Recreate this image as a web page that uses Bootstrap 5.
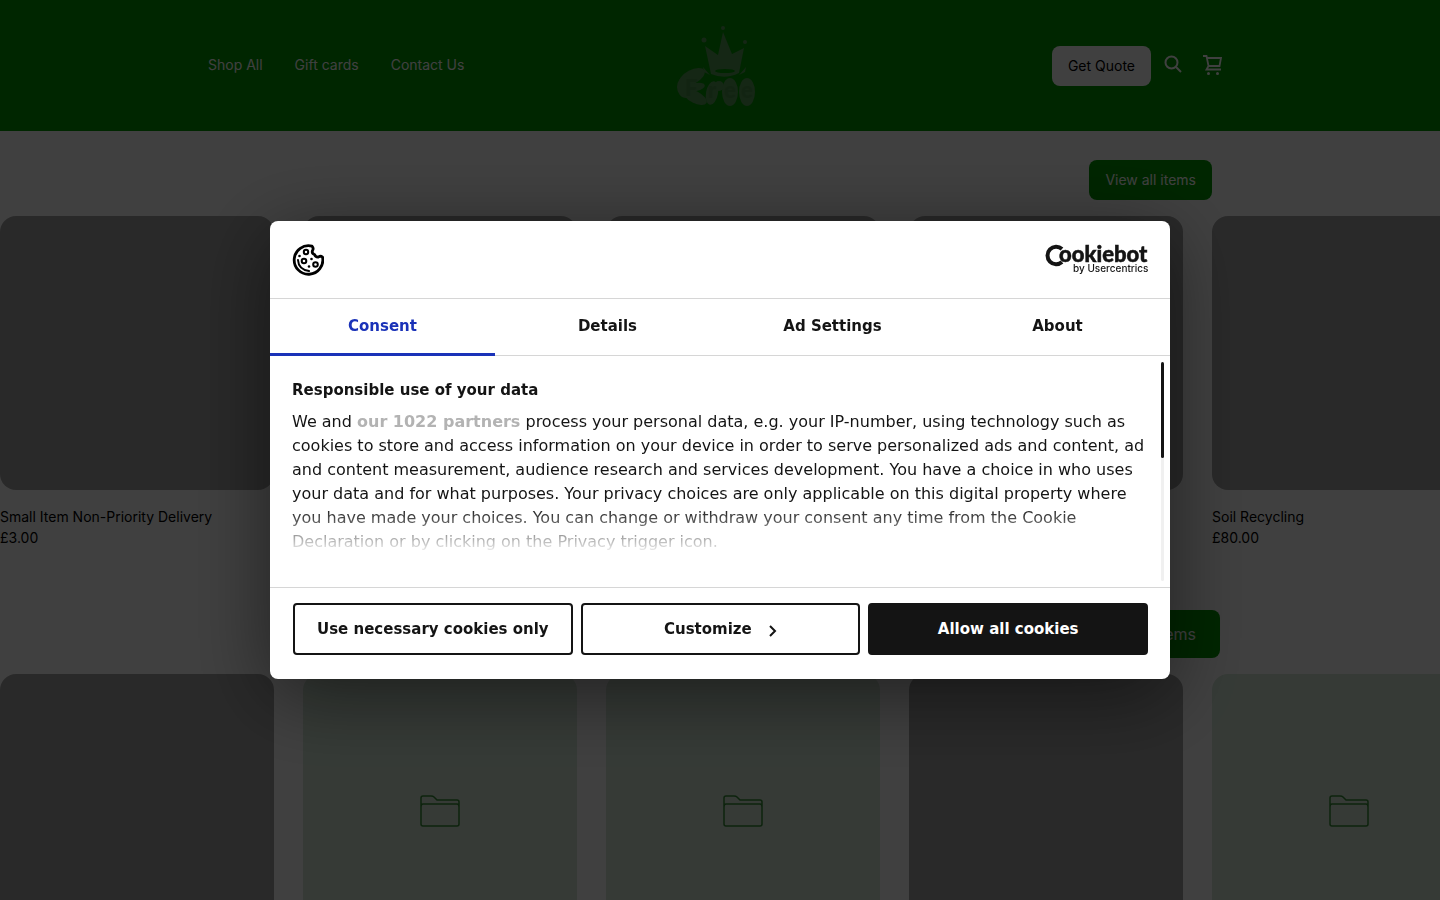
<!DOCTYPE html>
<html lang="en">
<head>
<meta charset="utf-8">
<meta name="viewport" content="width=device-width, initial-scale=1">
<title>Shop</title>
<link href="https://cdn.jsdelivr.net/npm/bootstrap@5.3.0/dist/css/bootstrap.min.css" rel="stylesheet">
<style>
  body { font-family: Inter, "Liberation Sans", sans-serif; font-size: 14px; line-height: 21px; color: #000; height: 100vh; overflow: hidden; }
  .shop-header { background: #009600; min-height: 131px; }
  .shop-wrap { width: 100%; max-width: 1024px; margin: 0 auto; }
  .shop-header a { color: #fff; text-decoration: none; }
  .side { flex: 1 1 0; }
  .main-nav { gap: 32px; padding-bottom: 2px; }
  .shop-btn { font-size: 14px; line-height: 24px; padding: 8px 16px; border: 0; border-radius: 8px; }
  .shop-btn.green { background: #009600; color: #fff; }
  .shop-btn.light { background: #fff; color: #000; }
  .shop-btn.large { font-size: 16px; line-height: 32px; padding: 8px 24px; }
  .icon-btn { border: 0; background: none; padding: 0 0 2px; color: #fff; line-height: 0; }
  .tiles { gap: 29px; }
  .tile { flex: 0 0 274px; }
  .tile-pic { aspect-ratio: 1; border-radius: 16px; background: #a4a4a4; color: #358a35; }
  .tile-pic.folder { background: #d6e8d8; }
  .backdrop { background: rgba(0,0,0,.75); }

  .modal { font-family: "DejaVu Sans", sans-serif; font-size: 15px; line-height: 24px; color: #141414; }
  .modal-dialog { max-width: 900px; margin-top: 0; margin-bottom: 0; min-height: 100%; }
  .modal-content { border: 0; border-radius: 8px; color: #141414; box-shadow: 0 16px 80px rgba(0,0,0,.5); }
  .dlg-head { min-height: 78px; padding: 0 22px; border-bottom: 1px solid #d6d6d6; }
  .dlg-tabs { border-bottom: 1px solid #d6d6d6; }
  .dlg-tabs button { border: 0; background: none; font-weight: 700; color: #141414; padding: 15px 0 17px; height: 57px; margin-bottom: -1px; border-bottom: 3px solid transparent; }
  .dlg-tabs button.active { color: #1a32b8; border-color: #1a32b8; }
  .dlg-body { padding: 22px 22px 32px; min-height: 231px; }
  .dlg-body h2 { font-size: 15px; line-height: 24px; font-weight: 700; margin: 0 0 8px; }
  .dlg-body p { font-size: 16px; line-height: 24px; }
  .dlg-body a { color: #b3b3b3; font-weight: 700; text-decoration: none; }
  .fade-out { left: 0; right: 16px; bottom: 32px; height: 56px; background: linear-gradient(rgba(255,255,255,0) 15%, #fff); }
  .track { right: 6px; top: 6px; bottom: 6px; width: 3px; border-radius: 2px; background: #f0f0f0; }
  .thumb { height: 96px; border-radius: 2px; background: #141414; }
  .dlg-foot { padding: 15px 22px 24px 23px; gap: 8px; border-top: 1px solid #d6d6d6; }
  .dlg-foot button { flex: 1 1 0; height: 52px; border: 2px solid #141414; border-radius: 4px; background: #fff; color: #141414; font-weight: 700; }
  .dlg-foot button.solid { background: #141414; color: #fff; }
</style>
</head>
<body>
<header class="shop-header d-flex align-items-center">
  <div class="shop-wrap d-flex align-items-center">
    <nav class="side main-nav d-flex" aria-label="Main">
      <a href="#">Shop All</a><a href="#">Gift cards</a><a href="#">Contact Us</a>
    </nav>
    <a href="#" aria-label="Free, home" class="lh-1">
      <svg width="92" height="100" viewBox="2 0 92 100" fill="#549a54">
        <path d="M36 30l13 9 5-23 9 22 12-6-5 25q-14 7-28 1z"/>
        <circle cx="54" cy="12" r="2"/><circle cx="35" cy="24" r="2.500"/><circle cx="76" cy="26" r="2"/>
        <path d="M34 51l7 8-6-3zM77 51l-7 8 6-3z"/>
        <ellipse cx="56" cy="55" rx="10" ry="2" fill="#009600"/>
        <!-- bubble shapes behind the lettering -->
        <ellipse cx="23" cy="61" rx="14" ry="7" transform="rotate(-28 23 61)"/>
        <ellipse cx="17" cy="71" rx="9" ry="11"/>
        <ellipse cx="27" cy="71" rx="9" ry="4" transform="rotate(-12 27 71)"/>
        <ellipse cx="26" cy="81" rx="13" ry="6" transform="rotate(28 26 81)"/>
        <ellipse cx="43" cy="77" rx="6" ry="12" transform="rotate(10 43 77)"/>
        <circle cx="50" cy="70" r="5"/>
        <ellipse cx="61" cy="76" rx="8" ry="14"/>
        <ellipse cx="78" cy="76" rx="8" ry="14"/>
        <g font-family="Lato, sans-serif" font-weight="900" fill="#488f48">
          <text x="16" y="80" font-size="22">F</text>
          <text x="39" y="82" font-size="22">r</text>
          <text x="55" y="82" font-size="22">e</text>
          <text x="72" y="82" font-size="22">e</text>
        </g>
      </svg>
    </a>
    <div class="side d-flex align-items-center justify-content-end" style="padding-right:7px">
      <button class="shop-btn light" type="button">Get Quote</button>
      <button class="icon-btn ms-2 ps-1" type="button" aria-label="Search">
        <svg width="20" height="20" viewBox="0 0 20 20" fill="none" stroke="currentColor" stroke-width="2"><circle cx="8.500" cy="7.500" r="6"/><path d="M13 12l5 5"/></svg>
      </button>
      <button class="icon-btn ms-3 ps-1" type="button" aria-label="Cart">
        <svg width="22" height="22" viewBox="0 0 22 22" fill="none" stroke="currentColor" stroke-width="1.800"><path d="M0 2h3.500l2 10h11l1.500-8H4M5.500 12l-2 3.500H18"/><circle cx="5.500" cy="19.500" r="1.500" fill="currentColor" stroke="none"/><circle cx="14.500" cy="19.500" r="1.500" fill="currentColor" stroke="none"/></svg>
      </button>
    </div>
  </div>
</header>

<main>
  <section style="padding-top:29px">
    <div class="shop-wrap d-flex justify-content-end mb-3" style="padding-right:20px">
      <button class="shop-btn green" type="button">View all items</button>
    </div>
    <div class="tiles d-flex">
      <div class="tile"><div class="tile-pic mb-3"></div><div>Small Item Non-Priority Delivery</div><div>£3.00</div></div>
      <div class="tile"><div class="tile-pic"></div></div>
      <div class="tile"><div class="tile-pic"></div></div>
      <div class="tile"><div class="tile-pic"></div></div>
      <div class="tile"><div class="tile-pic mb-3"></div><div>Soil Recycling</div><div>£80.00</div></div>
    </div>
  </section>
  <section style="padding-top:62px">
    <div class="shop-wrap d-flex justify-content-end mb-3" style="padding-right:12px">
      <button class="shop-btn green large" type="button">View all items</button>
    </div>
    <svg class="d-none"><symbol id="folder" viewBox="0 0 40 32"><path d="M1 12V3q0-2 2-2h8q2 0 3 1l3 3h20q2 0 2 2v5M1 12q0-3 2-3h34q2 0 2 3v17q0 2-2 2H3q-2 0-2-2z" fill="none" stroke="currentColor" stroke-width="1.500"/></symbol></svg>
    <div class="tiles d-flex">
      <div class="tile"><div class="tile-pic"></div></div>
      <div class="tile"><div class="tile-pic folder d-flex align-items-center justify-content-center"><svg width="40" height="32"><use href="#folder"/></svg></div></div>
      <div class="tile"><div class="tile-pic folder d-flex align-items-center justify-content-center"><svg width="40" height="32"><use href="#folder"/></svg></div></div>
      <div class="tile"><div class="tile-pic"></div></div>
      <div class="tile"><div class="tile-pic folder d-flex align-items-center justify-content-center"><svg width="40" height="32"><use href="#folder"/></svg></div></div>
    </div>
  </section>
</main>

<div class="backdrop position-fixed top-0 start-0 w-100 h-100"></div>
<div class="modal d-block" role="dialog" aria-modal="true" aria-label="Cookie consent">
  <div class="modal-dialog modal-dialog-centered">
    <div class="modal-content">
      <div class="dlg-head d-flex align-items-center justify-content-between">
        <svg width="32" height="32" viewBox="0 0 32 32" fill="none" stroke="#000" stroke-width="2.800" stroke-linejoin="round" stroke-linecap="round">
          <path d="M20 2.100A14.300 14.300 0 1 0 30.500 13q-2-1.500-4 0-3 .3-4-2.500-3-1-2-4 1.500-2-.5-4.400z"/>
          <g stroke-width="2"><circle cx="14" cy="8" r="2.200"/><circle cx="12" cy="17" r="2.300"/><circle cx="23.500" cy="20.500" r="2.300"/><path d="M6 16q.5 9.500 11 11"/></g>
          <g fill="#000" stroke="none"><circle cx="7.500" cy="12" r="1.300"/><circle cx="19.500" cy="15" r="1.300"/><circle cx="17" cy="22.500" r="1.300"/></g>
        </svg>
        <svg width="104" height="40" viewBox="0 -4 104 40" fill="#141414" role="img" aria-label="Cookiebot by Usercentrics">
          <path d="M18 5A8.700 8.700 0 1 0 18 18" fill="none" stroke="#141414" stroke-width="4"/>
          <text x="15" y="18" font-family="Lato, sans-serif" font-weight="900" font-size="22" stroke="#141414" stroke-width=".5">ookiebot</text>
          <text x="29" y="28" font-family="Inter, sans-serif" font-size="10" font-weight="500">by Usercentrics</text>
        </svg>
      </div>
      <div class="dlg-tabs d-flex" role="tablist">
        <button class="col-3 active" type="button" role="tab" aria-selected="true">Consent</button>
        <button class="col-3" type="button" role="tab">Details</button>
        <button class="col-3" type="button" role="tab">Ad Settings</button>
        <button class="col-3" type="button" role="tab">About</button>
      </div>
      <div class="dlg-body position-relative">
        <h2>Responsible use of your data</h2>
        <p class="m-0">We and <a href="#">our 1022 partners</a> process your personal data, e.g. your IP-number, using technology such as cookies to store and access information on your device in order to serve personalized ads and content, ad and content measurement, audience research and services development. You have a choice in who uses your data and for what purposes. Your privacy choices are only applicable on this digital property where you have made your choices. You can change or withdraw your consent any time from the Cookie Declaration or by clicking on the Privacy trigger icon.</p>
        <div class="fade-out position-absolute"></div>
        <div class="track position-absolute"><div class="thumb"></div></div>
      </div>
      <div class="dlg-foot d-flex">
        <button type="button">Use necessary cookies only</button>
        <button type="button">Customize <svg class="ms-2" width="12" height="16" viewBox="2 0 12 16" fill="none" stroke="currentColor" stroke-width="2"><path d="M7 4l5 5-5 5"/></svg></button>
        <button class="solid" type="button">Allow all cookies</button>
      </div>
    </div>
  </div>
</div>
<script src="https://cdn.jsdelivr.net/npm/bootstrap@5.3.0/dist/js/bootstrap.bundle.min.js"></script>
</body>
</html>
